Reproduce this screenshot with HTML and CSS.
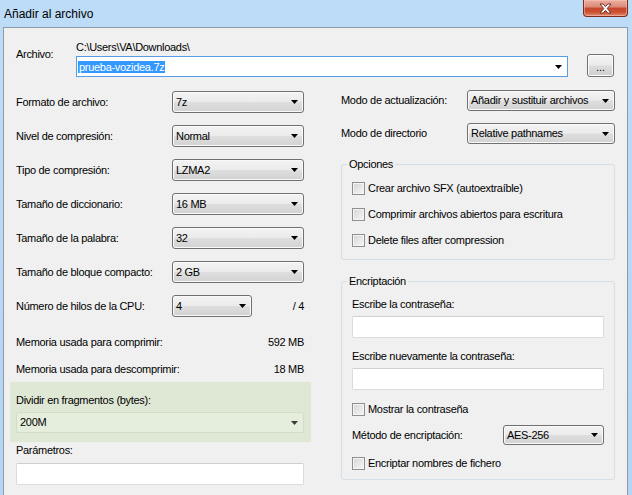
FILE: index.html
```html
<!DOCTYPE html>
<html lang="es">
<head>
<meta charset="utf-8">
<title>Añadir al archivo</title>
<link rel="stylesheet" href="styles.css">
</head>
<body>
<div class="window">
  <div class="titlebar">
    <span class="title">Añadir al archivo</span>
    <div class="close">
      <svg width="13" height="11" viewBox="0 0 13 11"><path d="M1 1 H4.2 L6.5 3.6 L8.8 1 H12 L8.2 5.5 L12 10 H8.8 L6.5 7.4 L4.2 10 H1 L4.8 5.5 Z" fill="#fff" stroke="#6a2218" stroke-width="0.9" stroke-linejoin="round"/></svg>
    </div>
  </div>
  <div class="client">
    <div class="file-grid">
      <span class="file-label">Archivo:</span>
      <span class="path">C:\Users\VA\Downloads\</span>
      <div class="edit-combo">
        <span class="sel">prueba-vozidea.7z</span>
        <svg class="arrow" width="7" height="4" viewBox="0 0 7 4"><polygon points="0,0 7,0 3.5,4" fill="#000"/></svg>
      </div>
      <div class="btn">...</div>
    </div>

    <div class="main">
      <div class="col-left">
        <div class="rows">
          <div class="row"><span class="lbl">Formato de archivo:</span><div class="combo w-left"><span>7z</span><svg class="arrow" width="7" height="4" viewBox="0 0 7 4"><polygon points="0,0 7,0 3.5,4" fill="#000"/></svg></div></div>
          <div class="row"><span class="lbl">Nivel de compresión:</span><div class="combo w-left"><span>Normal</span><svg class="arrow" width="7" height="4" viewBox="0 0 7 4"><polygon points="0,0 7,0 3.5,4" fill="#000"/></svg></div></div>
          <div class="row"><span class="lbl">Tipo de compresión:</span><div class="combo w-left"><span>LZMA2</span><svg class="arrow" width="7" height="4" viewBox="0 0 7 4"><polygon points="0,0 7,0 3.5,4" fill="#000"/></svg></div></div>
          <div class="row"><span class="lbl">Tamaño de diccionario:</span><div class="combo w-left"><span>16 MB</span><svg class="arrow" width="7" height="4" viewBox="0 0 7 4"><polygon points="0,0 7,0 3.5,4" fill="#000"/></svg></div></div>
          <div class="row"><span class="lbl">Tamaño de la palabra:</span><div class="combo w-left"><span>32</span><svg class="arrow" width="7" height="4" viewBox="0 0 7 4"><polygon points="0,0 7,0 3.5,4" fill="#000"/></svg></div></div>
          <div class="row"><span class="lbl">Tamaño de bloque compacto:</span><div class="combo w-left"><span>2 GB</span><svg class="arrow" width="7" height="4" viewBox="0 0 7 4"><polygon points="0,0 7,0 3.5,4" fill="#000"/></svg></div></div>
          <div class="row"><span class="lbl">Número de hilos de la CPU:</span><div class="combo w-cpu"><span>4</span><svg class="arrow" width="7" height="4" viewBox="0 0 7 4"><polygon points="0,0 7,0 3.5,4" fill="#000"/></svg></div><span class="of">/ 4</span></div>
        </div>
        <div class="mem-block">
          <div class="mem"><span>Memoria usada para comprimir:</span><span>592 MB</span></div>
          <div class="mem"><span>Memoria usada para descomprimir:</span><span>18 MB</span></div>
        </div>
        <div class="split">
          <div class="split-label">Dividir en fragmentos (bytes):</div>
          <div class="combo green-combo"><span>200M</span><svg class="arrow" width="7" height="4" viewBox="0 0 7 4"><polygon points="0,0 7,0 3.5,4" fill="#3c3c3c"/></svg></div>
        </div>
        <div class="params">
          <div class="params-label">Parámetros:</div>
          <div class="textbox"></div>
        </div>
      </div>

      <div class="col-right">
        <div class="rrows">
          <div class="rrow"><span class="rlbl">Modo de actualización:</span><div class="combo w-right"><span>Añadir y sustituir archivos</span><svg class="arrow" width="7" height="4" viewBox="0 0 7 4"><polygon points="0,0 7,0 3.5,4" fill="#000"/></svg></div></div>
          <div class="rrow"><span class="rlbl">Modo de directorio</span><div class="combo w-right"><span>Relative pathnames</span><svg class="arrow" width="7" height="4" viewBox="0 0 7 4"><polygon points="0,0 7,0 3.5,4" fill="#000"/></svg></div></div>
        </div>

        <fieldset class="group group-options">
          <legend>Opciones</legend>
          <div class="checks">
            <label class="check"><span class="box"></span><span>Crear archivo SFX (autoextraíble)</span></label>
            <label class="check"><span class="box"></span><span>Comprimir archivos abiertos para escritura</span></label>
            <label class="check"><span class="box"></span><span>Delete files after compression</span></label>
          </div>
        </fieldset>

        <fieldset class="group group-enc">
          <legend>Encriptación</legend>
          <div class="enc-label">Escribe la contraseña:</div>
          <div class="textbox enc-box"></div>
          <div class="enc-label second">Escribe nuevamente la contraseña:</div>
          <div class="textbox enc-box"></div>
          <label class="check show-pass"><span class="box"></span><span>Mostrar la contraseña</span></label>
          <div class="method-row"><span>Método de encriptación:</span><div class="combo w-method"><span>AES-256</span><svg class="arrow" width="7" height="4" viewBox="0 0 7 4"><polygon points="0,0 7,0 3.5,4" fill="#000"/></svg></div></div>
          <label class="check enc-names"><span class="box"></span><span>Encriptar nombres de fichero</span></label>
        </fieldset>
      </div>
    </div>
  </div>
</div>
</body>
</html>
```

FILE: styles.css
```css
* { box-sizing: border-box; }

html, body {
  margin: 0;
  padding: 0;
  background: #b9d9f5;
}

body {
  font-family: "Liberation Sans", Arial, sans-serif;
  font-size: 11px;
  letter-spacing: -0.3px;
  line-height: 13px;
  color: #000;
}

.window {
  width: 632px;
  height: 495px;
  display: flex;
  flex-direction: column;
  overflow: hidden;
  background: linear-gradient(180deg, #bddcf7 0%, #b4d5f3 100%);
}

.titlebar {
  height: 27px;
  display: flex;
  align-items: flex-start;
  flex-shrink: 0;
}

.title {
  font-size: 12px;
  letter-spacing: 0;
  line-height: 14px;
  padding: 7px 0 0 4px;
}

.close {
  margin-left: auto;
  margin-right: 4px;
  width: 45px;
  height: 17px;
  border: 1px solid #7d2a1e;
  border-top: none;
  border-radius: 0 0 4px 4px;
  background: linear-gradient(180deg, #eab0a2 0%, #dc8b77 42%, #c8472f 52%, #c9502f 75%, #e08a6c 100%);
  box-shadow: inset 0 0 0 1px rgba(255, 200, 190, 0.5);
  display: flex;
  align-items: center;
  justify-content: center;
}

.client {
  flex: 1;
  margin-left: 3px;
  width: 625px;
  border: 1px solid #8e9aa8;
  border-bottom: none;
  background: #f0f0f0;
}

/* Archivo */
.file-grid {
  display: grid;
  grid-template-columns: 41px 492px 27px;
  grid-template-rows: auto auto;
  column-gap: 19px;
  padding: 13px 0 0 12px;
}

.file-label {
  grid-column: 1;
  grid-row: 1 / 3;
  margin-top: 7px;
  white-space: nowrap;
}

.path {
  grid-column: 2;
  grid-row: 1;
}

.edit-combo {
  grid-column: 2;
  grid-row: 2;
  margin-top: 2px;
  height: 21px;
  border: 1px solid #569de5;
  background: #fff;
  display: flex;
  align-items: center;
  padding: 0 5px 0 1px;
}

.sel {
  background: #3399ff;
  color: #fff;
  line-height: 12px;
  padding: 0 1px;
}

.arrow {
  margin-left: auto;
  flex-shrink: 0;
  display: block;
}

.btn {
  grid-column: 3;
  grid-row: 2;
  height: 23px;
  border: 1px solid #707070;
  border-radius: 3px;
  background: linear-gradient(180deg, #f4f4f4 0%, #ebebeb 48%, #dddddd 52%, #cfcfcf 100%);
  box-shadow: inset 0 0 0 1px #fcfcfc;
  display: flex;
  align-items: flex-end;
  justify-content: center;
  padding-bottom: 4px;
  letter-spacing: 0;
  line-height: 10px;
}

/* main */
.main {
  display: grid;
  grid-template-columns: 301px 274px;
  column-gap: 30px;
  margin-top: 13px;
  padding-left: 6px;
}

.col-left {
  padding-top: 1px;
}

.rows {
  display: flex;
  flex-direction: column;
  gap: 12px;
}

.row {
  display: flex;
  align-items: center;
  height: 22px;
  padding: 0 7px 0 6px;
}

.lbl {
  width: 156px;
  flex-shrink: 0;
}

.combo {
  display: flex;
  align-items: center;
  height: 22px;
  border: 1px solid #707070;
  border-radius: 3px;
  background: linear-gradient(180deg, #f3f3f3 0%, #ebebeb 48%, #dedede 52%, #d2d2d2 100%);
  box-shadow: inset 0 0 0 1px #fafafa;
  padding: 0 5px 0 3px;
  white-space: nowrap;
}

.w-left { width: 132px; }
.w-cpu { width: 80px; }
.w-right { width: 148px; height: 21px; }
.w-method { width: 101px; height: 20px; }

.of {
  margin-left: auto;
  padding-right: 0;
}

.mem-block {
  margin-top: 19px;
  display: flex;
  flex-direction: column;
  gap: 14px;
  padding: 0 7px 0 6px;
}

.mem {
  display: flex;
  justify-content: space-between;
}

.split {
  margin-top: 6px;
  background: #dfe8d5;
  padding: 12px 7px 9px 6px;
}

.green-combo {
  margin-top: 5px;
  height: 21px;
  border: 1px solid #d2dcc9;
  background: #e5eedd;
  box-shadow: none;
  border-radius: 2px;
}

.params {
  margin-top: 2px;
  padding: 0 7px 0 6px;
}

.textbox {
  height: 22px;
  background: #fff;
  border: 1px solid #dcdcdc;
  border-top-color: #cfcfcf;
  border-radius: 2px;
}

.params .textbox {
  margin-top: 6px;
}

/* right column */
.rrows {
  display: flex;
  flex-direction: column;
  gap: 12px;
}

.rrow {
  display: flex;
  align-items: center;
  height: 21px;
}

.rlbl {
  width: 126px;
  flex-shrink: 0;
}

.group {
  margin: 14px 0 0;
  min-width: 0;
  border: 1px solid #d5dfe5;
  border-radius: 3px;
  padding: 11px 10px 12px;
}

.group legend {
  padding: 0 2px;
  margin-left: -5px;
  line-height: 13px;
}

.group-enc {
  margin-top: 15px;
  padding: 10px 10px 9px;
}

.checks {
  display: flex;
  flex-direction: column;
  gap: 13px;
}

.check {
  display: flex;
  align-items: center;
  gap: 3px;
  height: 13px;
}

.box {
  width: 13px;
  height: 13px;
  flex-shrink: 0;
  border: 1px solid #8e8f8f;
  background: linear-gradient(135deg, #d4d4d4 0%, #e6e6e6 50%, #f7f7f7 100%);
  box-shadow: inset 0 0 0 1px #f4f4f4;
}

.enc-box {
  margin-top: 5px;
}

.enc-label.second {
  margin-top: 12px;
}

.show-pass {
  margin-top: 13px;
}

.method-row {
  margin-top: 9px;
  display: flex;
  align-items: center;
  justify-content: space-between;
}

.enc-names {
  margin-top: 12px;
}
```
